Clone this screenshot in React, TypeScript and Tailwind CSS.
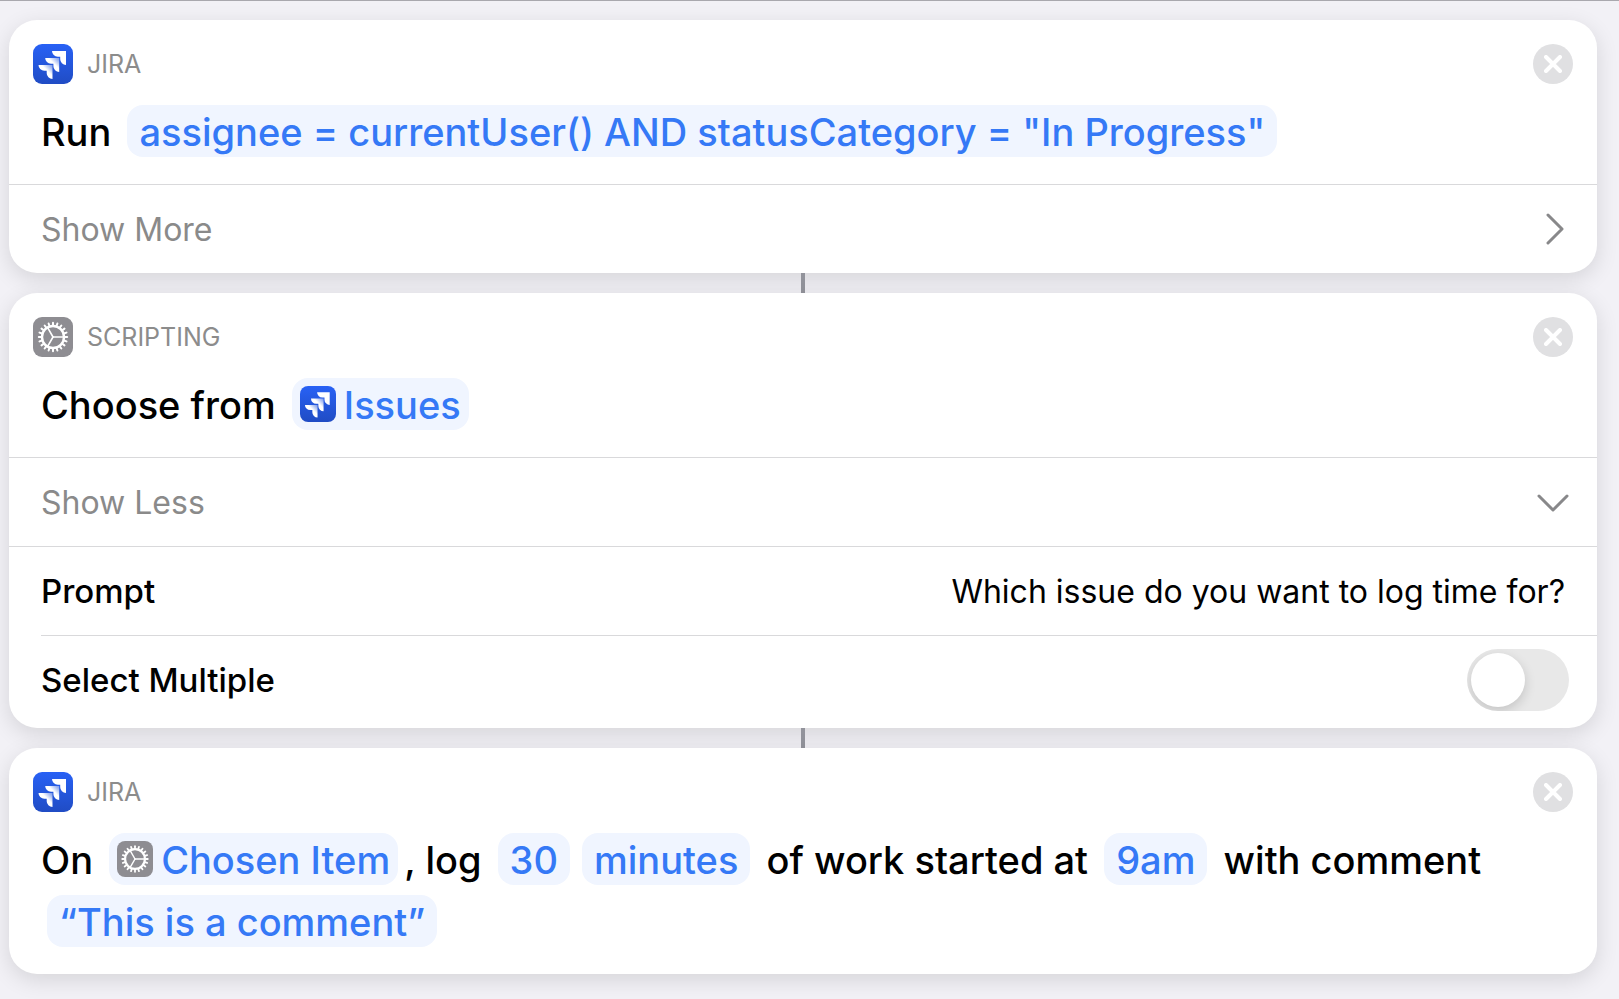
import { useId, useState, type ReactNode } from "react";

const GEAR_TEETH = Array.from({ length: 20 }, (_, i) => i * 18);
const GEAR_SPOKES = [0, 120, 240];
const JIRA_MARK =
  "M0 0H14V14A5.8 5.8 0 0 1 8.2 8.2V5.8H5.8A5.8 5.8 0 0 1 0 0Z";

function JiraIcon({ className }: { className: string }) {
  const id = useId();

  return (
    <svg aria-hidden viewBox="0 0 40 40" className={className}>
      <defs>
        <linearGradient id={`${id}-bg`} x1="0" y1="0" x2="0" y2="1">
          <stop offset="0" stopColor="#2861f5" />
          <stop offset="1" stopColor="#204cc4" />
        </linearGradient>
        <linearGradient id={`${id}-mark`} x1="1" y1="0" x2="0.4" y2="0.6">
          <stop offset="0.1" stopColor="#fff" stopOpacity="0.45" />
          <stop offset="0.65" stopColor="#fff" />
        </linearGradient>
      </defs>
      <rect width="40" height="40" rx="9" fill={`url(#${id}-bg)`} />
      <path d={JIRA_MARK} transform="translate(19 7)" fill="#fff" />
      <path
        d={JIRA_MARK}
        transform="translate(12.2 14)"
        fill={`url(#${id}-mark)`}
      />
      <path
        d={JIRA_MARK}
        transform="translate(5.5 21)"
        fill={`url(#${id}-mark)`}
      />
    </svg>
  );
}

function GearIcon({ className }: { className: string }) {
  return (
    <svg aria-hidden viewBox="0 0 40 40" className={className}>
      <rect width="40" height="40" rx="9" fill="#8e8d92" />
      <g fill="none" stroke="#fff" strokeLinecap="round">
        <circle cx="20" cy="20" r="11" strokeWidth="2.4" />
        {GEAR_TEETH.map((angle) => (
          <path
            key={angle}
            d="M31.5 20H34.2"
            strokeWidth="2"
            transform={`rotate(${angle} 20 20)`}
          />
        ))}
        {GEAR_SPOKES.map((angle) => (
          <path
            key={angle}
            d="M20 20H31"
            strokeWidth="1.6"
            transform={`rotate(${angle} 20 20)`}
          />
        ))}
      </g>
    </svg>
  );
}

const icons = { jira: JiraIcon, gear: GearIcon };
type IconName = keyof typeof icons;

function Token({ icon, children }: { icon?: IconName; children: ReactNode }) {
  const Icon = icon && icons[icon];

  return (
    <button
      type="button"
      className={`mx-1.5 inline-flex h-[52px] items-center gap-2 rounded-2xl bg-[#f0f5ff] text-[#3579f6] ${
        Icon ? "px-2" : "px-3"
      }`}
    >
      {Icon && <Icon className="size-9" />}
      <span className="self-baseline leading-[54px]">{children}</span>
    </button>
  );
}

function ActionCard({
  icon,
  app,
  summary,
  children,
}: {
  icon: IconName;
  app: string;
  summary: ReactNode;
  children?: ReactNode;
}) {
  const Icon = icons[icon];

  return (
    <section className="overflow-hidden rounded-[28px] bg-white shadow-[0_6px_22px_rgb(0_0_0_/_0.12)]">
      <header className="flex items-center gap-3.5 px-6 pt-6">
        <Icon className="size-10" />
        <h2 className="text-[25px] leading-10 text-[#8c8c8c]">{app}</h2>
        <button
          type="button"
          aria-label={`Remove ${app} action`}
          className="ml-auto flex size-10 items-center justify-center rounded-full bg-[#e0e0e2] text-white"
        >
          <svg aria-hidden viewBox="0 0 18 18" className="size-[18px]">
            <path
              d="M2 2L16 16M16 2L2 16"
              stroke="currentColor"
              strokeWidth="4"
              strokeLinecap="round"
            />
          </svg>
        </button>
      </header>
      <p className="px-8 pt-[17px] pb-[21px] text-[38px] leading-[62px] font-medium">
        {summary}
      </p>
      {children}
    </section>
  );
}

function DisclosureRow({ open, label }: { open: boolean; label: string }) {
  return (
    <button
      type="button"
      aria-expanded={open}
      className="flex h-[89px] w-full items-center justify-between border-t border-[#d9d9db] pr-7 pl-8 text-[32px] text-[#8a8a8a]"
    >
      <span className="pt-0.5">{label}</span>
      <svg aria-hidden viewBox="0 0 32 32" className="size-8">
        <path
          d={open ? "M2 10L16 24L30 10" : "M11 2L25 16L11 30"}
          fill="none"
          stroke="#88888a"
          strokeWidth="3"
          strokeLinecap="round"
          strokeLinejoin="round"
        />
      </svg>
    </button>
  );
}

function Connector() {
  return <div aria-hidden className="mx-auto h-5 w-1 bg-[#92939b]" />;
}

export default function App() {
  const [prompt, setPrompt] = useState("Which issue do you want to log time for?");
  const [multiple, setMultiple] = useState(false);

  return (
    <main className="min-h-screen border-t border-[#a9a8ae] bg-[#f2f1f6] pt-[19px] pr-[22px] pb-6 pl-[9px] font-[Inter,sans-serif] text-black">
      <ActionCard
        icon="jira"
        app="JIRA"
        summary={
          <>
            Run{" "}
            <Token>
              assignee = currentUser() AND statusCategory = "In Progress"
            </Token>
          </>
        }
      >
        <DisclosureRow open={false} label="Show More" />
      </ActionCard>

      <Connector />

      <ActionCard
        icon="gear"
        app="SCRIPTING"
        summary={
          <>
            Choose from <Token icon="jira">Issues</Token>
          </>
        }
      >
        <DisclosureRow open label="Show Less" />
        <div className="flex h-[89px] items-center gap-8 border-t border-[#d9d9db] px-8">
          <label htmlFor="prompt" className="pt-0.5 text-[33px] font-medium">
            Prompt
          </label>
          <input
            id="prompt"
            type="text"
            value={prompt}
            onChange={(event) => setPrompt(event.target.value)}
            className="min-w-0 flex-1 bg-transparent pt-0.5 text-right text-[32px] outline-none"
          />
        </div>
        <div className="ml-8 flex h-[93px] items-center justify-between border-t border-[#d9d9db] pr-7 pb-1">
          <label
            htmlFor="select-multiple"
            className="pt-0.5 text-[33px] font-medium"
          >
            Select Multiple
          </label>
          <input
            id="select-multiple"
            type="checkbox"
            role="switch"
            checked={multiple}
            onChange={(event) => setMultiple(event.target.checked)}
            className="flex h-[62px] w-[102px] appearance-none overflow-hidden rounded-full bg-[#e8e8e8] p-1 before:size-[54px] before:rounded-full before:bg-white before:shadow-[0_4px_12px_rgb(0_0_0_/_0.16)] checked:justify-end checked:bg-[#34c759]"
          />
        </div>
      </ActionCard>

      <Connector />

      <ActionCard
        icon="jira"
        app="JIRA"
        summary={
          <>
            On <Token icon="gear">Chosen Item</Token>, log <Token>30</Token>
            <Token>minutes</Token> of work started at <Token>9am</Token> with
            comment <Token>“This is a comment”</Token>
          </>
        }
      />
    </main>
  );
}
